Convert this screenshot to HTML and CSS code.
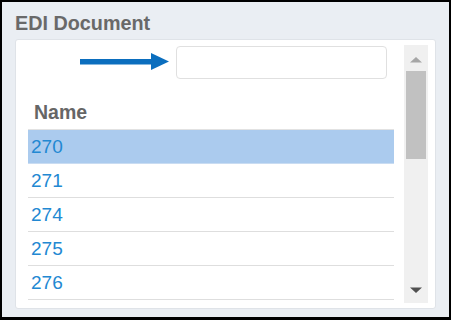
FILE: index.html
```html
<!DOCTYPE html>
<html>
<head>
<meta charset="utf-8">
<link rel="stylesheet" href="styles.css">
</head>
<body>
<div class="frame">
  <h1 class="title">EDI Document</h1>
  <div class="panel">
    <div class="content">
      <div class="search-row">
        <svg class="arrow" width="90" height="18" viewBox="0 0 90 18">
          <rect x="0" y="6" width="72" height="5.5" fill="#0b6ebe"/>
          <polygon points="71,0 89,8.5 71,17" fill="#0b6ebe"/>
        </svg>
        <input class="search" type="text">
      </div>
      <div class="table">
        <div class="th">Name</div>
        <div class="row selected">270</div>
        <div class="row">271</div>
        <div class="row">274</div>
        <div class="row">275</div>
        <div class="row">276</div>
      </div>
    </div>
    <div class="scrollbar">
      <div class="sb-btn up">
        <svg width="12" height="6" viewBox="0 0 12 6"><polygon points="0,5.5 6,0 12,5.5" fill="#a6a6a6"/></svg>
      </div>
      <div class="thumb"></div>
      <div class="sb-spacer"></div>
      <div class="sb-btn down">
        <svg width="12" height="6" viewBox="0 0 12 6"><polygon points="0,0.5 12,0.5 6,6" fill="#505050"/></svg>
      </div>
    </div>
  </div>
</div>
</body>
</html>
```
FILE: styles.css
```css
html, body {
  margin: 0;
  padding: 0;
  background: #eaeef3;
}
.frame {
  width: 451px;
  height: 320px;
  box-sizing: border-box;
  border: 2px solid #000;
  border-bottom-width: 3px;
  padding: 9px 13px 8px 13px;
  display: flex;
  flex-direction: column;
  font-family: "Liberation Sans", Arial, sans-serif;
}
.title {
  margin: 0 0 4px 0;
  font-size: 19.8px;
  line-height: 24px;
  font-weight: bold;
  color: #696969;
}
.panel {
  flex: 1;
  min-height: 0;
  background: #fff;
  border: 1px solid #dfe3e8;
  border-radius: 3px;
  padding: 5px 7px 5px 12px;
  display: flex;
  gap: 10px;
  overflow: hidden;
}
.content {
  flex: 1;
  min-width: 0;
  display: flex;
  flex-direction: column;
}
.search-row {
  display: flex;
  justify-content: flex-end;
  align-items: center;
  gap: 6px;
  padding-right: 7px;
  margin-top: 1px;
}
.arrow {
  display: block;
  margin-top: -2px;
}
.search {
  width: 211px;
  height: 33px;
  box-sizing: border-box;
  border: 1px solid #e0e0e0;
  border-radius: 4px;
  margin: 0;
  padding: 0 8px;
  background: #fff;
}
.table {
  margin-top: 21px;
}
.th {
  font-size: 19.5px;
  line-height: 25px;
  font-weight: bold;
  color: #666;
  padding: 0 0 4px 6px;
  border-bottom: 1px solid #e2e2e2;
}
.row {
  height: 33px;
  line-height: 33px;
  font-size: 19px;
  color: #2288d2;
  padding-left: 3px;
  border-bottom: 1px solid #dedede;
}
.row.selected {
  background: #abcbee;
  border-bottom-color: #c9dcf2;
}
.scrollbar {
  width: 24px;
  flex: none;
  background: #f0f0f0;
  display: flex;
  flex-direction: column;
  align-items: center;
}
.sb-btn {
  height: 26px;
  width: 100%;
  display: flex;
  justify-content: center;
  align-items: center;
  flex: none;
}
.sb-btn svg {
  display: block;
}
.sb-btn.up {
  padding-top: 4px;
  box-sizing: border-box;
}
.thumb {
  width: 20px;
  height: 88px;
  background: #c1c1c1;
  flex: none;
}
.sb-spacer {
  flex: 1;
}
```
